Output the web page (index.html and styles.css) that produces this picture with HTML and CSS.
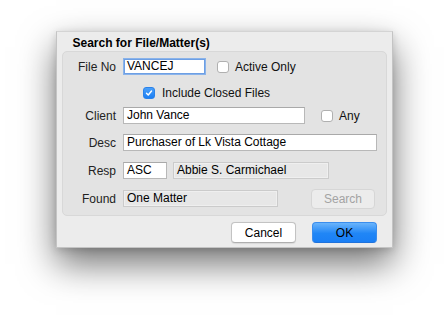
FILE: index.html
```html
<!DOCTYPE html>
<html>
<head>
<meta charset="utf-8">
<link rel="stylesheet" href="styles.css">
</head>
<body>
<div class="window">
  <div class="title">Search for File/Matter(s)</div>
  <div class="group">
    <div class="row r1">
      <span class="label">File No</span>
      <span class="field focus w-file">VANCEJ</span>
      <span class="check ml-active"></span>
      <span class="ctext">Active Only</span>
    </div>
    <div class="row r2">
      <span class="check checked ml-closed"><svg viewBox="0 0 12 12" width="12" height="12"><path d="M3 6.3 L5.1 8.4 L9 3.6" fill="none" stroke="#fff" stroke-width="1.7" stroke-linecap="round" stroke-linejoin="round"/></svg></span>
      <span class="ctext">Include Closed Files</span>
    </div>
    <div class="row r3">
      <span class="label">Client</span>
      <span class="field w-client">John Vance</span>
      <span class="check ml-any"></span>
      <span class="ctext">Any</span>
    </div>
    <div class="row r4">
      <span class="label">Desc</span>
      <span class="field w-desc">Purchaser of Lk Vista Cottage</span>
    </div>
    <div class="row r5">
      <span class="label">Resp</span>
      <span class="field w-resp">ASC</span>
      <span class="field ro w-name">Abbie S. Carmichael</span>
    </div>
    <div class="row r6">
      <span class="label">Found</span>
      <span class="field ro w-found">One Matter</span>
      <span class="btn disabled w-search">Search</span>
    </div>
  </div>
  <div class="buttons">
    <span class="btn cancel">Cancel</span>
    <span class="btn ok">OK</span>
  </div>
</div>
</body>
</html>
```
FILE: styles.css
```css
html, body {
  margin: 0;
  padding: 0;
  background: #ffffff;
}
body {
  min-height: 328px;
  box-sizing: border-box;
  padding: 31px 0 0 56px;
  font-family: "Liberation Sans", Arial, sans-serif;
  font-size: 12px;
  color: #111;
}
.window {
  width: 337px;
  height: 217px;
  box-sizing: border-box;
  background: #ececec;
  border: 1px solid #c4c4c4;
  border-top-color: #d4d4d4;
  box-shadow: 0 16px 34px rgba(0,0,0,0.55), 0 2px 8px rgba(0,0,0,0.15);
  display: flex;
  flex-direction: column;
}
.title {
  font-weight: bold;
  line-height: 14px;
  margin: 4px 0 0 15.5px;
  color: #000;
}
.group {
  margin: 1px 5px 0 5px;
  height: 165px;
  box-sizing: border-box;
  background: #e3e3e3;
  border: 1px solid #d8d8d8;
  border-radius: 5px;
  display: flex;
  flex-direction: column;
  padding-top: 6px;
}
.row {
  display: flex;
  align-items: center;
  height: 17px;
  flex: none;
}
.r2 { margin-top: 9px; }
.r3 { margin-top: 6px; }
.r4 { margin-top: 10px; }
.r5 { margin-top: 11px; }
.r6 { margin-top: 11px; }
.label {
  width: 53px;
  margin-right: 7px;
  text-align: right;
  color: #222;
}
.field {
  height: 17px;
  box-sizing: border-box;
  background: #fff;
  border: 1px solid #b8b8b8;
  border-top-color: #a9a9a9;
  padding: 0 3px;
  line-height: 15px;
  white-space: nowrap;
  overflow: hidden;
  color: #000;
}
.field.focus {
  border: 1px solid #8ab3ea;
  box-shadow: inset 0 0 0 1px #6d9fe4;
  padding-left: 3px;
}
.field.ro {
  background: #e7e7e7;
  border-color: #cbcbcb;
  box-shadow: inset 0 0 0 1px #efefef;
}
.w-file { width: 83px; }
.w-client { width: 182px; }
.w-desc { width: 254px; }
.w-resp { width: 44px; }
.w-name { width: 156px; margin-left: 6px; }
.w-found { width: 155px; }
.check {
  width: 12px;
  height: 12px;
  box-sizing: border-box;
  background: #fff;
  border: 1px solid #b0b0b0;
  border-radius: 3px;
  display: flex;
  align-items: center;
  justify-content: center;
  flex: none;
}
.check.checked {
  background: linear-gradient(#4aa0fa, #1c7ff3);
  border-color: #2a82ea;
}
.check svg { display: block; }
.ml-active { margin-left: 11px; }
.ml-closed { margin-left: 80px; }
.ml-any { margin-left: 16px; }
.ctext {
  margin-left: 6px;
  color: #111;
}
.r2 .ctext { margin-left: 7px; }
.btn {
  display: flex;
  align-items: center;
  justify-content: center;
  box-sizing: border-box;
  border-radius: 4px;
  flex: none;
}
.w-search {
  width: 64px;
  height: 20px;
  margin-left: 33px;
}
.disabled {
  background: #ececec;
  border: 1px solid #d6d6d6;
  color: #a3a3a3;
}
.buttons {
  display: flex;
  justify-content: flex-end;
  gap: 16px;
  margin: 6px 15px 0 0;
}
.cancel, .ok {
  width: 65px;
  height: 21px;
  color: #000;
}
.cancel {
  background: #fff;
  border: 1px solid #c3c3c3;
  border-bottom-color: #afafaf;
  box-shadow: 0 0.5px 1px rgba(0,0,0,0.08);
}
.ok {
  background: linear-gradient(#6ab4fb, #2086f6 55%, #1a7ff5);
  border: 1px solid #3a8ded;
  border-bottom-color: #1f72db;
}
```
